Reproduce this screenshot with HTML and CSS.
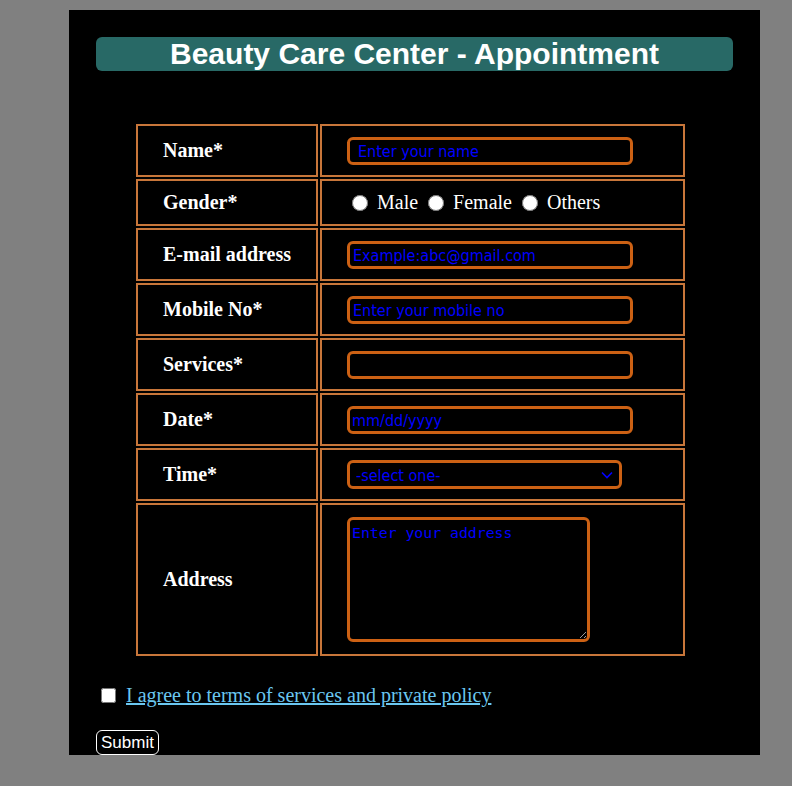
FILE: index.html
```html
<!DOCTYPE html>
<html>
<head>
<meta charset="utf-8">
<title>Beauty Care Center - Appointment</title>
<link rel="stylesheet" href="styles.css">
</head>
<body>
<div class="container">
  <h1 class="title">Beauty Care Center - Appointment</h1>
  <form class="form">
    <table class="grid">
      <tr class="row">
        <td class="label">Name*</td>
        <td class="field"><input class="text name" type="text" placeholder="Enter your name"></td>
      </tr>
      <tr class="row row-short">
        <td class="label">Gender*</td>
        <td class="field radios">
          <input class="radio" type="radio" name="g"><span class="opt">Male</span>
          <input class="radio" type="radio" name="g"><span class="opt">Female</span>
          <input class="radio" type="radio" name="g"><span class="opt">Others</span>
        </td>
      </tr>
      <tr class="row">
        <td class="label">E-mail address</td>
        <td class="field"><input class="text" type="email" placeholder="Example:abc@gmail.com"></td>
      </tr>
      <tr class="row">
        <td class="label">Mobile No*</td>
        <td class="field"><input class="text" type="text" placeholder="Enter your mobile no"></td>
      </tr>
      <tr class="row">
        <td class="label">Services*</td>
        <td class="field"><input class="text" type="text"></td>
      </tr>
      <tr class="row">
        <td class="label">Date*</td>
        <td class="field"><input class="text date" type="text" placeholder="mm/dd/yyyy"></td>
      </tr>
      <tr class="row">
        <td class="label">Time*</td>
        <td class="field">
          <div class="select-wrap">
            <select class="select"><option>-select one-</option></select>
            <svg class="chev" width="12" height="8" viewBox="0 0 12 8"><path d="M1 1.5 L6 6.5 L11 1.5" fill="none" stroke="#0000ff" stroke-width="1.6"/></svg>
          </div>
        </td>
      </tr>
      <tr class="row row-tall">
        <td class="label">Address</td>
        <td class="field"><textarea class="area" placeholder="Enter your address"></textarea></td>
      </tr>
    </table>
    <div class="agree">
      <input class="check" type="checkbox">
      <a class="link" href="#">I agree to terms of services and private policy</a>
    </div>
    <button class="submit" type="button">Submit</button>
  </form>
</div>
</body>
</html>
```

FILE: styles.css
```css
html, body {
  margin: 0;
  padding: 0;
  background: #808080;
}
.container {
  margin: 10px 0 0 69px;
  width: 691px;
  height: 745px;
  box-sizing: border-box;
  padding: 27px;
  background: #000;
}
.title {
  margin: 0;
  height: 34px;
  line-height: 34px;
  background: #286966;
  border-radius: 6px;
  color: #fff;
  text-align: center;
  font-family: "Liberation Sans", Arial, sans-serif;
  font-weight: bold;
  font-size: 30px;
}
.form {
  margin: 0;
}
.grid {
  margin: 51px 0 0 38px;
  border-collapse: separate;
  border-spacing: 2px;
}
.grid td {
  border: 2px solid #c8763a;
  padding: 0 0 0 25px;
  vertical-align: middle;
  height: 49px;
}
.row-short td { height: 43px; }
.row-tall td { height: 149px; }
.label {
  width: 153px;
  color: #fff;
  font-family: "Liberation Serif", "Times New Roman", serif;
  font-weight: bold;
  font-size: 20px;
}
.field {
  width: 336px;
}
.text {
  display: block;
  box-sizing: border-box;
  width: 286px;
  height: 28px;
  margin: 0;
  padding: 1px 0 0 3px;
  border: 3px solid #cc6114;
  border-radius: 6px;
  background: #000;
  color: #0000ff;
  font-family: "DejaVu Sans Condensed", "Liberation Sans", Arial, sans-serif;
  font-size: 16px;
  outline: none;
}
.text.name { padding-left: 8px; }
.text.date { padding-left: 2px; }
.text::placeholder,
.area::placeholder {
  color: #0000ff;
  opacity: 1;
}
.radios {
  color: #fff;
  font-family: "Liberation Serif", "Times New Roman", serif;
  font-size: 20px;
}
.radio {
  width: 16px;
  height: 16px;
  margin: 0 9px 0 5px;
  vertical-align: -2px;
}
.select-wrap {
  position: relative;
  width: 275px;
  height: 29px;
}
.select {
  appearance: none;
  -webkit-appearance: none;
  box-sizing: border-box;
  width: 275px;
  height: 29px;
  margin: 0;
  padding: 1px 0 0 6px;
  border: 3px solid #cc6114;
  border-radius: 6px;
  background: #000;
  color: #0000ff;
  font-family: "DejaVu Sans Condensed", "Liberation Sans", Arial, sans-serif;
  font-size: 16px;
  outline: none;
}
.chev {
  position: absolute;
  right: 9px;
  top: 11px;
  pointer-events: none;
}
.area {
  display: block;
  box-sizing: border-box;
  width: 243px;
  height: 125px;
  margin: 0;
  padding: 4px 2px;
  border: 3px solid #cc6114;
  border-radius: 6px;
  background: #000;
  color: #0000ff;
  font-family: "DejaVu Sans Mono", "Liberation Mono", monospace;
  font-size: 14.8px;
  outline: none;
}
.agree {
  display: flex;
  align-items: center;
  margin-top: 26px;
  height: 23px;
}
.check {
  width: 15px;
  height: 15px;
  margin: 0 10px 0 5px;
}
.link {
  color: #6ac6f0;
  font-family: "Liberation Serif", "Times New Roman", serif;
  font-size: 20px;
  text-decoration: underline;
}
.submit {
  display: block;
  margin-top: 23px;
  width: 63px;
  height: 25px;
  padding: 0;
  background: #000;
  color: #fff;
  border: 1px solid #fff;
  border-radius: 6px;
  font-family: "Liberation Sans", Arial, sans-serif;
  font-size: 17px;
  line-height: 21px;
}
```
